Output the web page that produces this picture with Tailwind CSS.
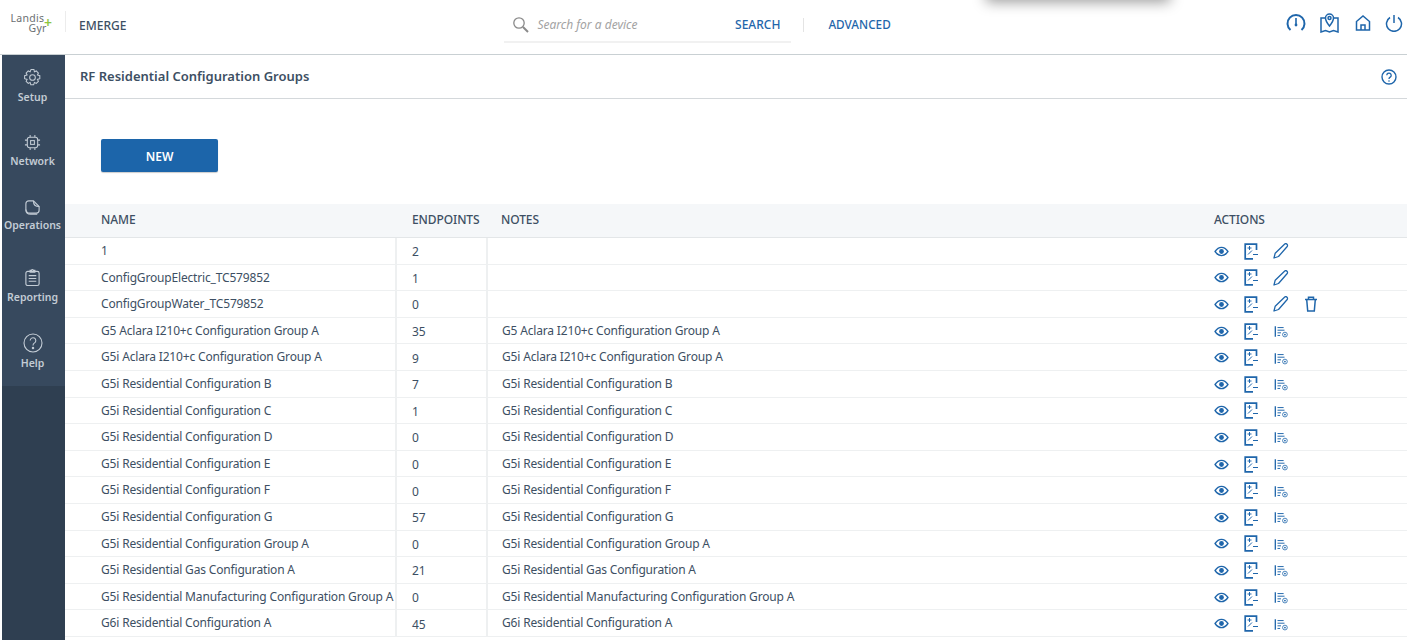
<!DOCTYPE html>
<html lang="en">
<head>
  <meta charset="UTF-8" />
  <title>RF Residential Configuration Groups</title>
  <script src="https://cdn.jsdelivr.net/npm/@tailwindcss/browser@4"></script>
</head>
<body class="h-[640px] overflow-hidden bg-white font-['Noto_Sans',sans-serif] text-[#3d4f63]">

  <svg class="hidden">
    <symbol id="eye" viewBox="0 0 16 12"><path d="M1 6c2-3 4.400-4.500 7-4.500S13 3 15 6c-2 3-4.400 4.500-7 4.500S3 9 1 6z" fill="none" stroke="currentColor" stroke-width="1.500"/><circle cx="8" cy="6" r="2.600" fill="currentColor"/></symbol>
    <symbol id="doc" viewBox="0 0 14 17"><path d="M12.500 7V1.200H1.200v14.600H9" fill="none" stroke="currentColor" stroke-width="1.700"/><path d="M3.500 5h4M5.500 3v4M4 11.500l4-4M9 11.500h5" fill="none" stroke="currentColor" stroke-width="1"/></symbol>
    <symbol id="pen" viewBox="0 0 16 16"><path d="M1 15l1.200-4.800L11.500 1.200c.8-.7 1.800-.7 2.500 0s.7 1.800 0 2.500L5.500 13.500z" fill="none" stroke="currentColor" stroke-width="1.300" stroke-linejoin="round"/></symbol>
    <symbol id="trash" viewBox="0 0 14 16"><path d="M1 3.500h12M4.500 3.500V1.200h5v2.300M2.700 3.500l1 11.500h6.600l1-11.500" fill="none" stroke="currentColor" stroke-width="1.500"/></symbol>
    <symbol id="list" viewBox="0 0 16 14"><path d="M1.500 1v12" stroke="currentColor" stroke-width="1.500"/><path d="M4 2.500h7M4 5.500h8M4 8.500h4M4 11.500h3" stroke="currentColor" stroke-width="1.100"/><circle cx="12.500" cy="10.500" r="2.700" fill="none" stroke="currentColor" stroke-width=".9"/><circle cx="12.500" cy="10.500" r="1" fill="currentColor"/></symbol>
  </svg>

  <div class="w-[1407px]">
    <!-- top bar -->
    <header class="flex h-[55px] items-center border-b border-[#c9d0d3] relative">
      <div class="w-[66px] shrink-0 flex justify-center border-r border-[#ececec] h-[21px] items-center -mt-[11px]">
        <div class="w-[44px] mt-[3px] text-[10.500px] leading-[10px] tracking-[0.3px] text-[#6b6f72]">
          <div>Landis</div>
          <div class="pl-[18px] whitespace-nowrap">Gyr</div>
        </div>
      </div>
      <span class="absolute left-[44px] top-[18px] text-[#8cc63f] text-[14px] leading-[10px] font-semibold">+</span>
      <div class="ml-[13px] -mt-[3px] text-[12px] font-medium">EMERGE</div>

      <div class="ml-[378px] self-start flex w-[287px] h-[43px] box-border pt-[8px] items-center border-b-2 border-[#f1f1f1]">
        <svg class="ml-[8px] w-[17px] h-[17px] text-[#8a8a8a]" viewBox="0 0 17 17" fill="none" stroke="currentColor"><circle cx="7" cy="7" r="5.200" stroke-width="1.300"/><path d="M11 11l5 5" stroke-width="2"/></svg>
        <span class="ml-[8px] text-[12px] italic text-[#a3a3a3]">Search for a device</span>
        <span class="ml-auto mr-[11px] text-[12px] font-medium text-[#1f66ab]">SEARCH</span>
      </div>
      <div class="ml-[12px] -mt-[5px] h-[14px] border-l border-[#e4e4e4]"></div>
      <span class="ml-[24px] -mt-[5px] text-[11.750px] font-medium text-[#1f66ab]">ADVANCED</span>

      <!-- shadow of a menu that sits above the window -->
      <div class="absolute left-[986px] -top-[20px] w-[184px] h-[20px] shadow-[0_2px_14px_rgba(0,0,0,0.4)]"></div>

      <div class="absolute right-[4px] top-[12px] flex items-center gap-[13.500px] text-[#1f66ab]">
        <svg class="w-[20px] h-[20px]" viewBox="0 0 20 20" fill="none" stroke="currentColor" stroke-width="2"><path d="M4.500 17A8.500 8.500 0 1 1 15.500 17"/><path d="M10 5v6" stroke-width="1.600"/><circle cx="10" cy="12" r="1.400" fill="currentColor" stroke="none"/></svg>
        <svg class="w-[21px] h-[21px]" viewBox="0 0 21 21" fill="none" stroke="currentColor" stroke-width="1.500"><path d="M6 6H2v14l4.500-1.500 4 1.500 4-1.500L19 20V6h-4"/><path d="M10.500 14C8 11 6.500 9 6.500 6a4 4 0 0 1 8 0c0 3-1.500 5-4 8z" fill="#fff"/><circle cx="10.500" cy="6" r="1.500"/></svg>
        <svg class="w-[18px] h-[18px]" viewBox="0 0 18 18" fill="none" stroke="currentColor" stroke-width="1.500"><path d="M2.500 7.500L9 2l6.500 5.500V16h-13z"/><path d="M7 16v-5h4v5"/></svg>
        <svg class="w-[18px] h-[18px]" viewBox="0 0 18 18" fill="none" stroke="currentColor" stroke-width="1.500"><path d="M5 3.500a7.500 7.500 0 1 0 8 0"/><path d="M9 1v8"/></svg>
      </div>
    </header>

    <div class="flex h-[585px]">
      <!-- side nav -->
      <nav class="ml-[2px] w-[63px] shrink-0 bg-[#2f3f51] text-[#c3ccd5] text-[10.500px] font-semibold">
        <div class="h-[331px] pr-[2px] flex flex-col items-center bg-[#37495e]">
          <div class="h-[64px] flex flex-col items-center pt-[13px]">
            <svg class="w-[19px] h-[19px]" viewBox="0 0 20 20" fill="none" stroke="currentColor" stroke-width="1.100"><path d="M8.500 1.500h3l.5 2.500 2-.9 2.200 2.200-1 2 2.500.8v3.100l-2.500.8 1 2-2.200 2.200-2-1-.8 2.500h-3l-.7-2.500-2 1-2.200-2.200 1-2-2.600-.8V8.100l2.600-.8-1-2 2.200-2.200 2 .9z"/><circle cx="10" cy="10" r="3"/></svg>
            <span class="mt-[3px] leading-[15px]">Setup</span>
          </div>
          <div class="h-[64px] flex flex-col items-center pt-[15px]">
            <svg class="w-[17px] h-[17px]" viewBox="0 0 18 18" fill="none" stroke="currentColor" stroke-width="1.100"><rect x="3.500" y="3.500" width="11" height="11" rx="2.500"/><rect x="7" y="7" width="4" height="4"/><path d="M6.500 1v2.500M11.500 1v2.500M6.500 14.500V17M11.500 14.500V17M1 6.500h2.500M1 11.500h2.500M14.500 6.500H17M14.500 11.500H17"/></svg>
            <span class="mt-[3px] leading-[15px]">Network</span>
          </div>
          <div class="h-[66px] flex flex-col items-center pt-[16px]">
            <svg class="w-[17px] h-[17px]" viewBox="0 0 18 18" fill="none" stroke="currentColor" stroke-width="1.200"><path d="M2 11V5a3 3 0 0 1 3-3h5l6 6v4a3 3 0 0 1-3 3H6a4 4 0 0 1-4-4z"/><path d="M10 2c0 4 2 6 6 6M2 11c0 3 2 5 5 5h7"/></svg>
            <span class="mt-[2px] leading-[15px]">Operations</span>
          </div>
          <div class="h-[72px] flex flex-col items-center pt-[19px]">
            <svg class="w-[17px] h-[19px]" viewBox="0 0 18 20" fill="none" stroke="currentColor" stroke-width="1.200"><rect x="2" y="3.500" width="14" height="15" rx="2"/><path d="M6.500 3.500V2.500h1.500a1 1 0 0 1 2 0h1.500v2h-5zM5 8h8M5 11h8M5 14h8"/></svg>
            <span class="mt-[3px] leading-[15px]">Reporting</span>
          </div>
          <div class="flex flex-col items-center pt-[12px]">
            <svg class="w-[20px] h-[20px]" viewBox="0 0 20 20" fill="none" stroke="currentColor" stroke-width="1.100"><circle cx="10" cy="10" r="9"/><path d="M7.200 7.500a2.800 2.800 0 1 1 4.300 2.400c-1 .6-1.500 1.100-1.500 2.600"/><circle cx="10" cy="15" r=".7" fill="currentColor"/></svg>
            <span class="mt-[3px] leading-[15px]">Help</span>
          </div>
        </div>
      </nav>

      <main class="flex-1 min-w-0">
        <div class="h-[44px] flex items-center border-b border-[#d4d8db] pl-[15px] pr-[10px]">
          <h1 class="pt-[1px] text-[13px] font-semibold">RF Residential Configuration Groups</h1>
          <svg class="ml-auto w-[16px] h-[16px] text-[#1f66ab]" viewBox="0 0 16 16" fill="none" stroke="currentColor" stroke-width="1.400"><circle cx="8" cy="8" r="7"/><path d="M5.800 6.300a2.200 2.200 0 1 1 3.400 1.800c-.8.500-1.200.9-1.200 1.900" stroke-width="1.300"/><circle cx="8" cy="12" r=".8" fill="currentColor" stroke="none"/></svg>
        </div>

        <button class="ml-[36px] mt-[40px] block w-[117px] h-[33px] pt-[2px] rounded-[2px] bg-[#1c65aa] text-white text-[12px] font-semibold shadow-[0_1px_1px_rgba(0,0,0,0.2)]">NEW</button>

        <div class="mt-[32px]">
          <div class="grid grid-cols-[332px_90px_727px_193px] h-[34px] pb-[1px] items-center bg-[#f5f7f9] border-b border-[#e3e6e8] text-[12px] tracking-[-0.1px] font-medium">
            <span class="pl-[36px]">NAME</span>
            <span class="pl-[15px]">ENDPOINTS</span>
            <span class="pl-[14px]">NOTES</span>
            <span>ACTIONS</span>
          </div>
          <div id="rows"></div>
        </div>
      </main>
    </div>
  </div>

  <script>
    const rows = [
      ['1', 2, '', 'edit'],
      ['ConfigGroupElectric_TC579852', 1, '', 'edit'],
      ['ConfigGroupWater_TC579852', 0, '', 'delete'],
      ['G5 Aclara I210+c Configuration Group A', 35],
      ['G5i Aclara I210+c Configuration Group A', 9],
      ['G5i Residential Configuration B', 7],
      ['G5i Residential Configuration C', 1],
      ['G5i Residential Configuration D', 0],
      ['G5i Residential Configuration E', 0],
      ['G5i Residential Configuration F', 0],
      ['G5i Residential Configuration G', 57],
      ['G5i Residential Configuration Group A', 0],
      ['G5i Residential Gas Configuration A', 21],
      ['G5i Residential Manufacturing Configuration Group A', 0],
      ['G6i Residential Configuration A', 45],
    ];

    const icon = (id, cls) => `<svg class="${cls}"><use href="#${id}"/></svg>`;

    document.getElementById('rows').innerHTML = rows.map(([name, count, notes, kind]) => {
      const last = kind
        ? icon('pen', 'ml-[15px] w-[16px] h-[16px]') + (kind === 'delete' ? icon('trash', 'ml-[15px] w-[14px] h-[16px]') : '')
        : icon('list', 'ml-[16px] w-[14px] h-[13px] mt-[1px]');
      return `<div class="grid grid-cols-[332px_90px_727px_193px] h-[26.600px] border-b border-[#eef0f1] text-[12px] tracking-[-0.17px] items-center">
        <span class="pl-[36px] self-stretch whitespace-nowrap border-r-2 border-[#eef0f1] leading-[25px]">${name}</span>
        <span class="pl-[15px] mt-[3px]">${count}</span>
        <span class="pl-[14px] self-stretch border-l-2 -ml-[1px] border-[#eef0f1] leading-[25px]">${notes ?? name}</span>
        <span class="flex items-center mt-[1px] text-[#1f66ab]">${icon('eye', 'w-[15px] h-[11px]')}${icon('doc', 'ml-[15px] w-[14px] h-[17px]')}${last}</span>
      </div>`;
    }).join('');
  </script>
</body>
</html>
